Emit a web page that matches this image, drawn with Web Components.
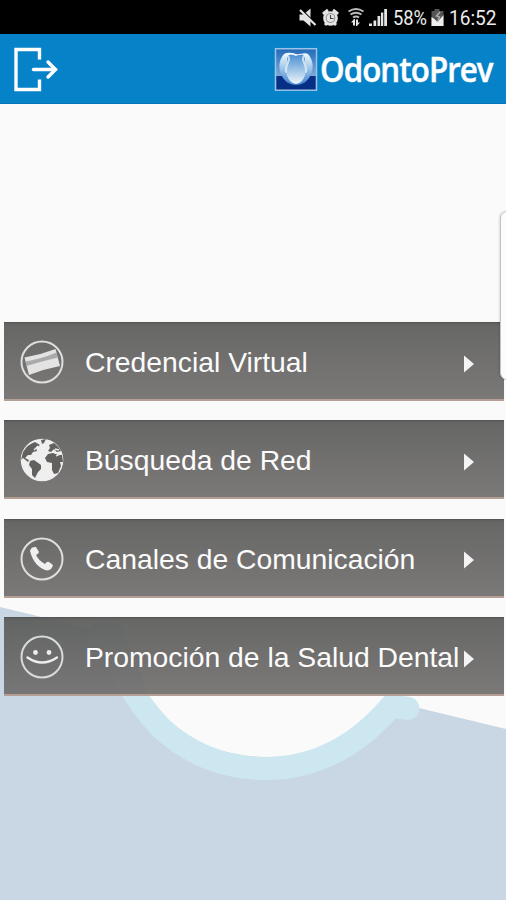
<!DOCTYPE html>
<html lang="es">
<head>
<meta charset="utf-8">
<title>OdontoPrev</title>
<style>
html,body{margin:0;padding:0;height:900px;overflow:hidden;background:#fafafa;font-family:"Liberation Sans",Arial,sans-serif}
</style>
</head>
<body>
<odonto-app></odonto-app>
<script>
function define(name, html){
  const t=document.createElement('template');
  t.innerHTML=html;
  customElements.define(name, class extends HTMLElement{
    constructor(){super();this.attachShadow({mode:'open'}).appendChild(t.content.cloneNode(true));}
  });
}

define('status-bar', `
<style>
:host{display:flex;height:34px;background:#000;box-sizing:border-box;justify-content:flex-end}
svg{display:block;flex:none}
.t{font:400 19.500px/37px Roboto,sans-serif;color:#ececec;white-space:nowrap}
.p{width:37px}.c{width:57px}
.t span{display:inline-block;transform-origin:0 50%}
.p span{transform:scaleX(.94)}.c span{transform:scaleX(.98)}
</style>
<svg width="95" height="34" viewBox="298 0 95 34" fill="#e4e4e4">
<path d="M299.500 14.500h4l7-6v18l-7-6h-4z"/><path d="M300.500 8.500l15 15" stroke="#000" stroke-width="1.500"/><path d="M300 10l15.500 15" stroke="#e4e4e4" stroke-width="2.200"/>
<circle cx="330.500" cy="18.500" r="7.300"/><path d="M323 14l5-4M338 14l-5-4M325 25l2-2M336 25l-2-2" stroke="#e4e4e4" stroke-width="3"/><circle cx="330.500" cy="18" r="4.800" fill="#777"/><circle cx="330.500" cy="18" r="4"/><path d="M330.500 15v3.500h3" fill="none" stroke="#444" stroke-width="1.100"/>
<g fill="none" stroke="#bbb" stroke-width="2"><path d="M348.500 11.500q7.500-5 15 0M350.500 14.500q5.500-3.500 11 0M353 17.500q3-2 6 0"/></g>
<path d="M354 19l-3 3.500h2v3h2v-6.500zM357 26l3-3.500h-2v-3h-2v6.500z"/>
<path d="M369 23.500h3v2.500h-3zM373.500 20.500h2.700v5.500h-2.700zM377.500 16h2.700v10h-2.700zM381 12.500h2.300v13.500H381zM384.200 9h2.800v17h-2.800z"/>
</svg>
<div class="t p"><span>58%</span></div>
<svg width="19" height="34" viewBox="430 0 19 34"><path d="M431.500 11h3V9h5v2h4v15h-12z" fill="#555"/><path d="M431.500 17l3 2 3 3 6-7v11h-12z" fill="#eee"/><path d="M440 12l-3.500 4 3 1-2 5" fill="none" stroke="#aaa" stroke-width="1.500"/></svg>
<div class="t c"><span>16:52</span></div>`);

define('brand-logo', `
<style>
:host{display:flex;height:44px;align-items:center}
svg{display:block;flex:none}
.n{width:173px;padding-left:1px;height:44px;white-space:nowrap;color:#fff;font:600 34.500px/43px "Open Sans","Noto Sans",sans-serif;letter-spacing:-1px;-webkit-text-stroke:.5px #fff}
.n span{display:inline-block;transform-origin:0 50%;transform:scaleX(.905)}
</style>
<svg width="45" height="44" viewBox="274 47 45 44">
<defs>
<linearGradient id="s" x2="0" y2="1"><stop offset="0" stop-color="#2369b8"/><stop offset="1" stop-color="#a9cbea"/></linearGradient>
<linearGradient id="o" x2="0" y2="1"><stop offset="0" stop-color="#f4faff"/><stop offset=".5" stop-color="#9cc3e8"/><stop offset="1" stop-color="#3f84ce"/></linearGradient>
<linearGradient id="i" x2="0" y2="1"><stop offset="0" stop-color="#4a8fd0"/><stop offset="1" stop-color="#eef6fd"/></linearGradient>
</defs>
<rect x="275.500" y="48.700" width="41" height="41.500" fill="url(#s)" stroke="#9bc4e6" stroke-width="1.500"/>
<path d="M276.300 76h39.400v13.400h-39.400z" fill="#082f86"/>
<path d="M284 54c4-2 8-1 12 0s8-2 12 0c5 6 6 13 3 20-3 7-8 11-15 11s-12-4-15-11c-3-7-2-14 3-20z" fill="url(#o)"/>
<path d="M288 55q4-1 8 1q4-2 8-1c2 4 0 7 2 11 1 7-2 12-4 15q-6 6-12 0c-2-3-5-8-4-15 2-4 0-7 2-11z" fill="url(#i)"/>
<path d="M285 54.500q4 .500 4 5c-1 4-4 8-3 13M307 54.500q-4 .500-4 5c1 4 4 8 3 13" fill="none" stroke="#e8f4fd" stroke-opacity=".75" stroke-width="2"/>
</svg><div class="n"><span>OdontoPrev</span></div>`);

define('app-header', `
<style>
:host{display:flex;height:70px;background:#0682c8;box-sizing:border-box;padding:0 13px 0 13px;justify-content:space-between;align-items:center;border-bottom:1px solid #0576b8}
svg{display:block}
</style>
<svg width="46" height="46" viewBox="13 46 46 46" fill="none" stroke="#fff" stroke-width="3.400"><path d="M39.500 59.500V49.500H16V89.500H39.500V79.500"/><path d="M33.500 69.500H55" stroke-linecap="round"/><path d="M48 62l7.500 7.500L48 77" stroke-linecap="round"/></svg>
<brand-logo></brand-logo>`);

define('menu-item', `
<style>
:host{display:flex;height:79px;box-sizing:border-box;align-items:center;padding:2px 29px 0 16px;background:linear-gradient(rgba(84,84,83,.93),rgba(91,91,90,.92) 3px,rgba(113,111,110,.93) 75px,rgba(115,113,112,.94));border-bottom:2px solid #b59f94;border-top:1px solid #555}
slot[name=icon]{display:block;width:44px;flex:none}
.label{margin-left:21px;flex:1;width:0;white-space:nowrap;font-size:28.300px;line-height:36px;color:#fcfcfc}
svg{display:block;flex:none;margin-top:3px}
</style>
<slot name="icon"></slot><div class="label"><slot></slot></div>
<svg width="12" height="18" viewBox="0 0 12 18"><path d="M1 .5L11 9 1 17.500z" fill="#f4f4f4"/></svg>`);

const icons={
card:'<circle cx="22" cy="22" r="20.500" fill="none" stroke="#dedede" stroke-width="2"/><path d="M4.500 17.500Q20 15 35.500 9L40 26Q24 29 9 35Z" fill="#e2e3e2"/><path d="M5.500 21.500Q21 19 36.500 12.500L37.700 17.500Q21 21.500 6.500 26Z" fill="#aaa"/>',
globe:'<circle cx="22" cy="22" r="21.300" fill="#eeefee"/><g fill="#62615f"><path d="M3 14Q8 6 15 4L20 7 16 10 17 13 13 14 11 17 8 17 5 20 9 22 8 24 3 20 1 22Z"/><path d="M10 23L14 22 21 27 21 31 18 34 15 40 12 37 12 31 9 27Z"/><path d="M28 16L33 15 38 17 42 17 43 24 40 24 41 28 38 35 34 36 32 32 32 25 27 24 25 20Z"/><path d="M29 7L34 5Q38 8 41 13L37 14 34 11 31 14 28 13 30 10ZM21 2L26 1 24 5 22 6ZM6 10L11 7 12 11Z"/></g><path d="M14 12L18 8M35 11l4 1M36 18l5-2" stroke="#eeefee" stroke-width="1.300"/>',
phone:'<circle cx="22" cy="22" r="20.500" fill="none" stroke="#dedede" stroke-width="2"/><path d="M10 14Q11 9.500 16 10L19 15Q18.500 17 16 18Q19 24 25 27Q27 24 29 25L33 28Q32 33 27 33.500Q14 30 10 14Z" fill="#eeefee"/>',
smile:'<circle cx="22" cy="22" r="20.500" fill="none" stroke="#d8dadb" stroke-width="2"/><circle cx="15.500" cy="17.500" r="2.400" fill="#ededed"/><circle cx="29" cy="17.500" r="2.400" fill="#ededed"/><path d="M7.500 22.500Q22 32.500 37 22.500" fill="none" stroke="#ededed" stroke-width="2.400" stroke-linecap="round"/>'
};
customElements.define('menu-icon', class extends HTMLElement{
  constructor(){super();this.attachShadow({mode:'open'});}
  connectedCallback(){
    this.shadowRoot.innerHTML='<style>:host{display:block}svg{display:block}</style><svg width="44" height="44" viewBox="0 0 44 44">'+icons[this.getAttribute('name')]+'</svg>';
  }
});

define('tooth-backdrop', `
<style>:host{display:block;position:absolute;inset:0}svg{display:block}</style>
<svg width="506" height="900" viewBox="0 0 506 900">
<rect width="506" height="900" fill="#fafafa"/>
<path d="M0 607L506 729V900H0Z" fill="#c9d6e3"/>
<path d="M110 600H400V698Q350 757 270 757 190 757 150 698Z" fill="#fafafa"/>
<path d="M99 634L113 634Q120 685 161 728Q206 768.500 265 768.500Q338 768.500 391 706L408 708.500" fill="none" stroke="#cde7f0" stroke-width="23" stroke-linecap="round" stroke-linejoin="round"/>
</svg>`);

define('edge-handle', `
<style>:host{display:block;position:absolute;left:500px;top:211px;width:20px;height:169px;box-sizing:border-box;border:1px solid #c4c4c4;border-radius:7px;background:#fcfcfc;box-shadow:-1px 0 2px rgba(0,0,0,.12)}</style>`);

define('odonto-app', `
<style>
:host{display:flex;flex-direction:column;position:relative;width:506px;height:900px;overflow:hidden}
status-bar,app-header,nav{position:relative}
nav{display:flex;flex-direction:column;gap:19.400px;padding:218px 2.500px 0 4px}
</style>
<tooth-backdrop></tooth-backdrop>
<status-bar></status-bar>
<app-header></app-header>
<nav>
<menu-item><menu-icon slot="icon" name="card"></menu-icon>Credencial Virtual</menu-item>
<menu-item><menu-icon slot="icon" name="globe"></menu-icon>Búsqueda de Red</menu-item>
<menu-item><menu-icon slot="icon" name="phone"></menu-icon>Canales de Comunicación</menu-item>
<menu-item><menu-icon slot="icon" name="smile"></menu-icon>Promoción de la Salud Dental</menu-item>
</nav>
<edge-handle></edge-handle>`);
</script>
</body>
</html>
